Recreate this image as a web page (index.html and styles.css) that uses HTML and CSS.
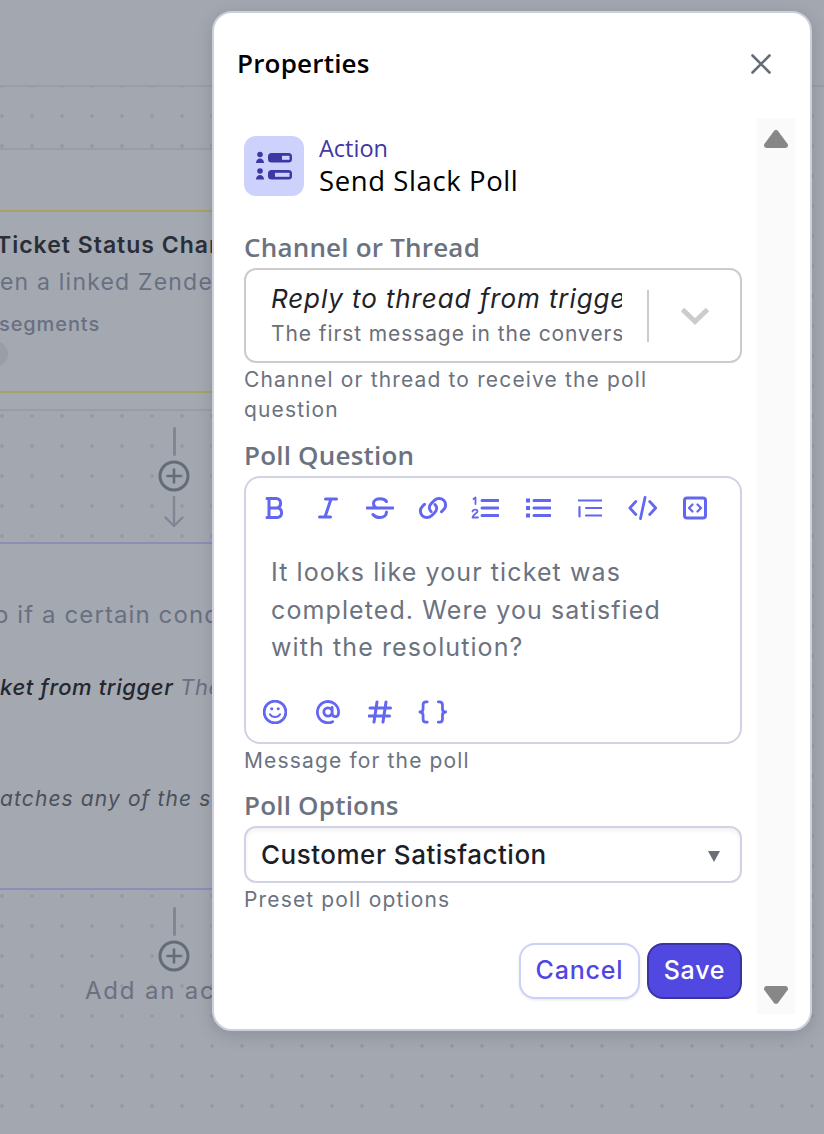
FILE: index.html
```html
<!DOCTYPE html>
<html lang="en">
<head>
<meta charset="utf-8">
<title>Properties</title>
<link rel="stylesheet" href="styles.css">
</head>
<body>
<svg class="sprite" width="0" height="0" aria-hidden="true">
  <symbol id="plus-circle" viewBox="0 0 32 32"><circle cx="16" cy="16" r="14" fill="none" stroke="currentColor" stroke-width="3"/><path d="M16 9.5v13M9.5 16h13" fill="none" stroke="currentColor" stroke-width="2.6" stroke-linecap="round"/></symbol>
</svg>
<main class="canvas">
  <div class="topbar"></div>
  <section class="node node-trigger">
    <div class="card-yellow">
      <div class="card-title">Ticket Status Changed</div>
      <div class="card-sub">en a linked Zendesk ticket changes</div>
      <div class="card-seg">segments</div>
      <div class="pill"></div>
    </div>
  </section>
  <div class="link link-one">
    <span class="stem"></span>
    <svg class="plus"><use href="#plus-circle"/></svg>
    <svg class="arrow" viewBox="0 0 20 32"><path d="M10 1v29M1.5 21.500 10 30l8.500-8.500" fill="none" stroke="currentColor" stroke-width="2.400" stroke-linecap="round" stroke-linejoin="round"/></svg>
  </div>
  <section class="node node-cond">
    <div class="cond-line">o if a certain condition is met</div>
    <div class="cond-ticket"><b>ket from trigger</b> <span>The ticket</span></div>
    <div class="cond-match">atches any of the selected values</div>
  </section>
  <div class="link link-two">
    <span class="stem"></span>
    <svg class="plus"><use href="#plus-circle"/></svg>
    <span class="add-label">Add an action</span>
  </div>
</main>

<aside class="modal">
  <header class="modal-head">
    <h2 class="modal-title">Properties</h2>
    <svg class="close" viewBox="0 0 24 24"><path d="M3.500 3.500l17 17M20.500 3.500l-17 17" fill="none" stroke="currentColor" stroke-width="2.600" stroke-linecap="round"/></svg>
  </header>
  <div class="modal-scroll">
    <div class="form">
      <div class="action-head">
        <div class="tile">
          <svg viewBox="0 0 36 30" width="36" height="30">
            <g fill="#3f37a3">
              <circle cx="4" cy="3.500" r="2.800"/><path d="M0 12c0-3 2-4.500 4-4.500s4 1.500 4 4.500z"/>
              <circle cx="4" cy="20" r="2.800"/><path d="M0 28.500c0-3 2-4.500 4-4.500s4 1.500 4 4.500z"/>
              <rect x="12" y="2" width="24" height="9.500" rx="3.500"/>
              <rect x="12" y="19" width="24" height="9.500" rx="3.500"/>
            </g>
            <rect x="26" y="4.800" width="7.500" height="4" fill="#cdd2fc"/>
            <rect x="19" y="21.800" width="14.500" height="4" fill="#cdd2fc"/>
          </svg>
        </div>
        <div class="action-text">
          <div class="action-kind">Action</div>
          <div class="action-name">Send Slack Poll</div>
        </div>
      </div>

      <label class="field-label first">Channel or Thread</label>
      <div class="picker">
        <div class="picker-value">
          <div class="picker-main">Reply to thread from trigger</div>
          <div class="picker-sub">The first message in the conversation</div>
        </div>
        <span class="picker-sep"></span>
        <svg class="picker-chev" viewBox="0 0 30 20"><path d="M2.500 3.500 15 15.500 27.500 3.500" fill="none" stroke="currentColor" stroke-width="5"/></svg>
      </div>
      <p class="help help-wrap">Channel or thread to receive the poll question</p>

      <label class="field-label">Poll Question</label>
      <div class="editor">
        <div class="toolbar">
          <span class="tool"><svg viewBox="0 0 24 24"><path d="M4 2.500h9.500a4.800 4.800 0 0 1 0 9.500H6M6 2.500v19M6 12h8.500a4.800 4.800 0 0 1 0 9.500H4" /></svg></span>
          <span class="tool"><svg viewBox="0 0 24 24"><path d="M9.500 3h11M3.500 21h11M15 3 9 21"/></svg></span>
          <span class="tool"><svg viewBox="0 0 28 24"><path d="M1 12h26M20.500 5.500C19 3.500 17 2.800 14 2.800c-3.500 0-6.500 1.500-6.500 4.700 0 2 1 3.500 3 4.500M20.500 16c0 3.500-3 5.500-6.500 5.500-3.200 0-5.500-1-7-3"/></svg></span>
          <span class="tool"><svg viewBox="0 0 30 24"><path d="M13 15.500a5.500 5.500 0 0 1 0-7.700l3.500-3.500a6.500 6.500 0 0 1 9.200 9.200l-2.200 2.200M17 8.500a5.500 5.500 0 0 1 0 7.700l-3.500 3.500a6.500 6.500 0 0 1-9.200-9.200l2.200-2.200"/></svg></span>
          <span class="tool"><svg viewBox="0 0 28 24"><path d="M11 4.500h16M11 12h16M11 19.500h16"/><path class="thin" d="M2.500 3 4.500 1.500V8M1.500 15.500c.5-2.500 5-2.500 5 0 0 1.500-4.500 3-5 6h5.500"/></svg></span>
          <span class="tool"><svg viewBox="0 0 26 24"><path d="M9 4.500h16M9 12h16M9 19.500h16"/><path class="dot" d="M1 2.500h4v4H1zM1 10h4v4H1zM1 17.500h4v4H1z"/></svg></span>
          <span class="tool"><svg viewBox="0 0 24 24"><path class="mid" d="M0.500 4.500h23M8 12h15.500M8 19.500h15.500M1.500 11v9.500"/></svg></span>
          <span class="tool"><svg viewBox="0 0 32 26"><path d="M8.500 6 2 13l6.500 7M23.500 6 30 13l-6.500 7M18.500 1.500l-5 23"/></svg></span>
          <span class="tool"><svg viewBox="0 0 24 24"><rect x="1.500" y="2" width="21" height="20" rx="2.500"/><path class="mid" d="M9.500 8.500 6 12l3.500 3.500M14.500 8.500 18 12l-3.500 3.500"/></svg></span>
        </div>
        <div class="editor-text">It looks like your ticket was completed. Were you satisfied with the resolution?</div>
        <div class="toolbar toolbar-low">
          <span class="tool"><svg viewBox="0 0 26 26"><circle cx="13" cy="13" r="11.800"/><path class="mid" d="M7.500 15.500c2.500 4 8.500 4 11 0"/><path class="dot" d="M7.800 9.500a1.700 1.700 0 1 0 3.400 0 1.700 1.700 0 1 0-3.400 0zM14.800 9.500a1.700 1.700 0 1 0 3.400 0 1.700 1.700 0 1 0-3.400 0z"/></svg></span>
          <span class="tool"><svg viewBox="0 0 26 26"><path d="M18 23.500A11.500 11.500 0 1 1 24.500 13c0 3-1.300 5-3.500 5s-3.500-1.500-3.500-4V8M17.500 13a4.500 4.500 0 1 1-9 0 4.500 4.500 0 0 1 9 0z"/></svg></span>
          <span class="tool"><svg viewBox="0 0 24 24"><path d="M9 2 6 22M18 2l-3 20M2 8h20.500M1 16h20.500"/></svg></span>
          <span class="tool"><svg viewBox="0 0 32 26"><path d="M10 2H8.500C6 2 5.500 3.500 5.500 5.500v4c0 2-1.500 3.500-3.500 3.500 2 0 3.500 1.500 3.500 3.500v4c0 2 .5 3.500 3 3.500H10M22 2h1.500C26 2 26.500 3.500 26.500 5.500v4c0 2 1.500 3.500 3.500 3.500-2 0-3.500 1.500-3.500 3.500v4c0 2-.5 3.500-3 3.500H22"/></svg></span>
        </div>
      </div>
      <p class="help">Message for the poll</p>

      <label class="field-label tight">Poll Options</label>
      <div class="select">
        <span>Customer Satisfaction</span>
        <span class="select-caret"></span>
      </div>
      <p class="help">Preset poll options</p>

      <div class="actions">
        <button class="btn btn-cancel">Cancel</button>
        <button class="btn btn-save">Save</button>
      </div>
    </div>
    <div class="scrollbar">
      <span class="scroll-up"></span>
      <span class="scroll-down"></span>
    </div>
  </div>
</aside>
</body>
</html>
```
FILE: styles.css
```css
* { box-sizing: border-box; }
html, body { margin: 0; height: 100%; }
body {
  width: 824px;
  height: 1134px;
  overflow: hidden;
  position: relative;
  background: #a3a7af;
  font-family: "Inter", "Liberation Sans", sans-serif;
}
.sprite { position: absolute; }

/* dimmed workflow canvas */
.canvas {
  position: relative;
  width: 824px;
  height: 1134px;
  overflow: hidden;
  background-color: #a3a7af;
  background-image: radial-gradient(circle, #969aa4 1.6px, transparent 1.8px);
  background-size: 30px 30px;
  background-position: 17px 11px;
  color: #687082;
  white-space: nowrap;
}
.topbar {
  height: 87px;
  background: #a3a7af;
  border-bottom: 2px solid #999da7;
}
.node { position: absolute; background: #a4a8b0; }
.node-trigger {
  left: -200px; top: 148px; width: 800px; height: 263px;
  border-top: 2px solid #999da7;
  border-bottom: 2px solid #999da7;
  padding-top: 60px;
}
.card-yellow {
  height: 183px;
  border-top: 2px solid #a9a065;
  border-bottom: 2px solid #a9a065;
  padding: 17px 0 0 198px;
}
.card-title { font-size: 23px; line-height: 32px; font-weight: 600; color: #2a2e37; letter-spacing: 1px; margin-left: -2px; }
.card-sub { font-size: 23px; line-height: 32px; margin-top: 5px; margin-left: 2px; letter-spacing: 1.200px; }
.card-seg { font-size: 20px; line-height: 28px; margin-top: 12px; margin-left: 1px; font-weight: 500; letter-spacing: .9px; }
.pill { width: 60px; height: 26px; border-radius: 13px; background: #9a9ea8; margin: 3px 0 0 -50px; }

.link { position: absolute; left: 144px; width: 60px; display: flex; flex-direction: column; align-items: center; color: #6a7180; }
.link-one { top: 427px; }
.link-two { top: 907px; }
.stem { width: 3px; height: 29px; background: #808693; border-radius: 2px; }
.plus { width: 32px; height: 32px; margin-top: 4px; color: #646b7a; }
.arrow { width: 20px; height: 32px; margin-top: 4px; color: #808693; }
.add-label { font-size: 24px; line-height: 32px; margin-top: 3px; letter-spacing: 1.800px; align-self: flex-start; margin-left: -59px; }

.node-cond {
  left: -200px; top: 542px; width: 800px; height: 348px;
  border-top: 2px solid #8b8fb8;
  border-bottom: 2px solid #8b8fb8;
  padding-left: 200px;
}
.cond-line { font-size: 24px; line-height: 32px; margin-top: 55px; letter-spacing: 1.100px; margin-left: -6px; }
.cond-ticket { font-size: 22px; line-height: 30px; margin-top: 41px; font-style: italic; letter-spacing: .6px; }
.cond-ticket b { font-weight: 500; color: #24272e; }
.cond-match { font-size: 21px; line-height: 30px; margin-top: 82px; font-style: italic; color: #4c505b; letter-spacing: 1.100px; }

/* modal */
.modal {
  position: absolute;
  left: 212px; top: 11px;
  width: 600px; height: 1020px;
  background: #fff;
  border: 2px solid #cbd0dc;
  border-radius: 20px;
  box-shadow: 0 4px 16px rgba(60, 64, 75, .22);
  display: flex;
  flex-direction: column;
}
.modal-head {
  height: 105px;
  flex: none;
  display: flex;
  align-items: center;
  justify-content: space-between;
  padding: 0 37px 3px 23px;
}
.modal-title { margin: 0 0 2px; font: 600 26px/32px "Open Sans", sans-serif; color: #000; letter-spacing: .2px; }
.close { width: 24px; height: 24px; color: #666c79; }
.modal-scroll { display: flex; flex: 1; min-height: 0; padding-right: 15px; padding-bottom: 15px; }
.form { flex: 1; min-width: 0; padding: 18px 15px 0 30px; }
.scrollbar {
  width: 38px; flex: none;
  background: #fafafa;
  display: flex; flex-direction: column; justify-content: space-between; align-items: center;
  padding: 12px 0 10px;
}
.scroll-up, .scroll-down {
  width: 24px; height: 18px;
  background: #878787;
}
.scroll-up { clip-path: polygon(50% 0, 56% 1%, 100% 80%, 100% 100%, 0 100%, 0 80%, 44% 1%); border-radius: 3px; }
.scroll-down { clip-path: polygon(0 0, 100% 0, 100% 20%, 56% 99%, 44% 99%, 0 20%); border-radius: 3px; }

.action-head { display: flex; gap: 15px; height: 60px; }
.tile { width: 60px; height: 60px; border-radius: 12px; background: #cdd2fc; display: flex; align-items: center; justify-content: center; }
.action-kind { font: 400 23.500px/28px "Open Sans", sans-serif; color: #3f37a3; margin-top: -2px; }
.action-name { font: 400 27.500px/32px "Open Sans", sans-serif; color: #000; margin-top: 3px; letter-spacing: .6px; }

.field-label { display: block; font: 600 26px/34px "Open Sans", sans-serif; color: #6b7280; margin-top: 14px; margin-bottom: 4px; letter-spacing: .2px; }
.field-label.first { margin-top: 34px; }
.field-label.tight { margin-top: 13px; }
.picker {
  height: 95px;
  border: 2px solid #cccccc;
  border-radius: 12px;
  display: flex;
  align-items: center;
  padding-left: 25px;
}
.picker-value { width: 351px; overflow: hidden; white-space: nowrap; }
.picker-main { font-size: 26px; line-height: 32px; font-style: italic; color: #1f2229; letter-spacing: .9px; }
.picker-sub { font-size: 21px; line-height: 28px; color: #6b6f78; margin-top: 5px; letter-spacing: .9px; }
.picker-sep { width: 2px; height: 52px; background: #cccccc; margin-left: 25px; }
.picker-chev { width: 30px; height: 20px; color: #cccccc; margin-left: 31px; margin-top: 1px; }

.help { margin: 1.500px 0 -.5px; font-size: 21px; line-height: 30px; color: #6b7280; letter-spacing: 1.150px; }
.help-wrap { max-width: 440px; }

.editor {
  height: 268px;
  border: 2px solid #cfd3e3;
  border-radius: 16px;
  padding: 17px 0 0 0;
  display: flex;
  flex-direction: column;
}
.toolbar { display: flex; padding-left: 3px; height: 26px; }
.tool { width: 52.500px; height: 26px; display: flex; align-items: center; justify-content: center; color: #6366f1; }
.tool svg { height: 24px; width: auto; fill: none; stroke: currentColor; stroke-width: 3; stroke-linecap: round; stroke-linejoin: round; }
.tool .thin { stroke-width: 1.800; }
.tool .mid { stroke-width: 2.200; }
.tool .dot { fill: currentColor; stroke: none; }
.editor-text {
  font-size: 25px;
  line-height: 37.500px;
  color: #6b7280;
  padding: 33px 40px 0 25px;
  letter-spacing: 1.100px;
  height: 178px;
}

.select {
  height: 57px;
  border: 2px solid #cfd3e3;
  border-radius: 12px;
  box-shadow: inset 0 3px 4px rgba(0, 0, 0, .05);
  display: flex;
  align-items: center;
  justify-content: space-between;
  padding: 0 20px 0 15px;
  font-size: 26px;
  font-weight: 500;
  letter-spacing: .5px;
  color: #1b1f27;
}
.select-caret {
  width: 0; height: 0;
  border-left: 6px solid transparent;
  border-right: 6px solid transparent;
  border-top: 11px solid #6b6f78;
  margin-top: 3px;
}

.actions { display: flex; justify-content: flex-end; gap: 7px; margin-top: 29px; }
.btn { height: 56px; border-radius: 16px; font: 500 25px/1 "Inter", sans-serif; padding: 0 0 2px; letter-spacing: .8px; }
.btn-cancel { width: 121px; background: #fff; border: 2px solid #cdd0fb; color: #4f46e5; box-shadow: 0 1px 3px rgba(0,0,0,.1); }
.btn-save { width: 95px; background: #5048e0; border: 2px solid #3b33a0; color: #fff; }
```
